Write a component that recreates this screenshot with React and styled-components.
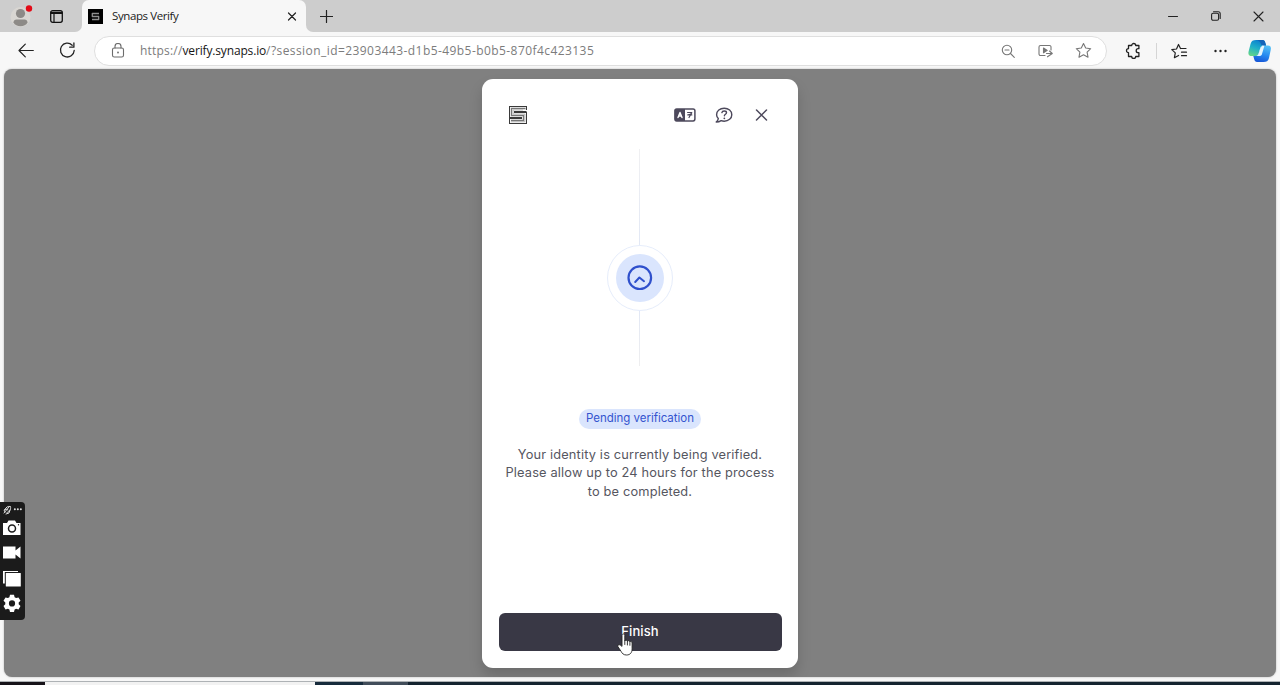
import React from "react";
import styled, { createGlobalStyle } from "styled-components";

const Global = createGlobalStyle`
  * { box-sizing: border-box; }
  body { margin: 0; overflow: hidden; background: #f7f7f7; }
  svg { display: block; flex: none; }
`;

const ui = `"Open Sans", "Noto Sans", sans-serif`;
const brand = `Inter, "Liberation Sans", sans-serif`;

const Window = styled.div`
  position: relative;
  width: 1280px;
  height: 685px;
  display: flex;
  flex-direction: column;
  background: #f7f7f7;
  overflow: hidden;
`;

const TabStrip = styled.header`
  height: 32px;
  flex: none;
  display: flex;
  align-items: stretch;
  background: linear-gradient(#cdcdcd 50%, #f7f7f7 50%);
`;

const StripTools = styled.div`
  width: 82px;
  display: flex;
  align-items: center;
  gap: 17px;
  padding-left: 10px;
  background: #cdcdcd;
  border-bottom-right-radius: 7px;
`;

const Tab = styled.div`
  width: 224px;
  display: flex;
  align-items: center;
  padding: 0 9px 0 6px;
  background: #f7f7f7;
  border-radius: 7px 7px 0 0;
`;

const TabTitle = styled.span`
  flex: 1;
  padding: 0 0 1px 9px;
  font: 11.5px/16px ${ui};
  letter-spacing: -0.4px;
  color: #1b1b1b;
`;

const StripRest = styled.div`
  flex: 1;
  display: flex;
  align-items: center;
  padding-left: 14px;
  background: #cdcdcd;
  border-bottom-left-radius: 7px;
`;

const WindowButtons = styled.div`
  margin-left: auto;
  display: flex;
  align-items: center;
`;

const WindowButton = styled.div`
  width: 43px;
  display: flex;
  justify-content: center;
`;

const Toolbar = styled.div`
  height: 37px;
  flex: none;
  display: flex;
  align-items: center;
  padding: 0 9px 0 18px;
`;

const Address = styled.div`
  width: 1013px;
  height: 30px;
  flex: none;
  margin-left: 18px;
  display: flex;
  align-items: center;
  padding: 0 14px 0 16px;
  border: 1px solid #dfdfdf;
  border-radius: 15px;
  background: #fff;
`;

const Url = styled.span`
  flex: 1;
  padding-left: 15px;
  font: 12px/16px ${ui};
  color: #7c7c7c;
  white-space: nowrap;
`;

const UrlPart = styled.span`
  color: ${(p) => (p.$host ? "#151515" : "inherit")};
  letter-spacing: ${(p) => p.$tracking}px;
`;

const AddressTools = styled.div`
  display: flex;
  gap: 21px;
  align-items: center;
`;

const BrowserTools = styled.div`
  flex: 1;
  display: flex;
  align-items: center;
  padding-left: 18px;
`;

const Tool = styled.span`
  margin-left: ${(p) => p.$gap}px;
`;

const Divider = styled.i`
  width: 1px;
  height: 16px;
  margin-left: 14px;
  background: #d5d5d5;
`;

const Viewport = styled.main`
  flex: 1;
  margin: 0 4px 4px;
  display: flex;
  justify-content: center;
  align-items: flex-start;
  padding-top: 10px;
  border-radius: 8px;
  background: #808080;
  box-shadow: 0 0 2px rgba(0, 0, 0, 0.3);
  overflow: hidden;
`;

const Card = styled.section`
  width: 316px;
  height: 589px;
  display: flex;
  flex-direction: column;
  align-items: center;
  padding: 26px 17px 17px;
  border-radius: 11px;
  background: #fff;
  box-shadow: 0 8px 14px rgba(0, 0, 0, 0.16);
`;

const CardHeader = styled.div`
  width: 100%;
  height: 20px;
  display: flex;
  align-items: center;
  padding: 0 13px 0 10px;
`;

const CardActions = styled.div`
  margin-left: auto;
  display: flex;
  align-items: center;
`;

const Action = styled.span`
  margin-left: ${(p) => p.$gap}px;
`;

const Line = styled.div`
  width: 1px;
  height: ${(p) => p.$height}px;
  margin: ${(p) => p.$top || 0}px 1px 0 0;
  background: ${(p) => p.$color};
`;

const Ring = styled.div`
  width: 66px;
  height: 66px;
  flex: none;
  display: grid;
  place-items: center;
  border: 1px solid #e6edfb;
  border-radius: 50%;
`;

const Disc = styled.div`
  width: 48px;
  height: 48px;
  display: grid;
  place-items: center;
  border-radius: 50%;
  background: #dae5fd;
`;

const Badge = styled.div`
  width: 122px;
  height: 20px;
  margin-top: 43px;
  border-radius: 10px;
  background: #dae5fd;
  text-align: center;
  font: 11.5px/19px ${brand};
  letter-spacing: -0.02px;
  color: #3454cf;
`;

const Message = styled.p`
  width: 282px;
  margin: 16.8px 0 0;
  text-align: center;
  font: 12.8px/18.6px ${brand};
  letter-spacing: 0.16px;
  color: #56565f;
  white-space: nowrap;
`;

const FinishButton = styled.button`
  width: 283px;
  height: 38px;
  flex: none;
  margin-top: auto;
  padding: 0 0 2px;
  border: 0;
  border-radius: 6px;
  background: #393845;
  color: #fff;
  font: 500 13px/18px ${brand};
  letter-spacing: 0.1px;
`;

const Taskbar = styled.footer`
  height: 4px;
  flex: none;
  display: flex;
  border-top: 1px solid #aeb2b5;
  background: #14232f;
`;

const TaskSegment = styled.div`
  width: ${(p) => p.$width}px;
  background: ${(p) => p.$color};
`;

const Recorder = styled.aside`
  position: absolute;
  left: 0;
  top: 501.5px;
  width: 24.5px;
  height: 118px;
  display: flex;
  flex-direction: column;
  align-items: flex-start;
  padding: 3px 0 0 2px;
  border-radius: 0 4px 4px 0;
  background: #1b1b1b;
`;

const Pointer = styled.div`
  position: absolute;
  left: 617px;
  top: 633px;
`;

const Icon = ({ w = 16, h = w, color = "#222", sw = 1.1, children }) => (
  <svg width={w} height={h} viewBox={`0 0 ${w} ${h}`} fill="none" stroke={color}
    strokeWidth={sw} strokeLinecap="round" strokeLinejoin="round">
    {children}
  </svg>
);

const Profile = () => (
  <Icon w={23} h={24} sw={0}>
    <circle cx="10.5" cy="13" r="10" fill="#d9d6d2" />
    <circle cx="10.5" cy="9.5" r="4.6" fill="#8d8a87" />
    <path d="M3.5 18.5c0-2 1.3-3 3-3h8c1.7 0 3 1 3 3-1.2 2.500-4 3.700-7 3.700s-5.800-1.200-7-3.700Z" fill="#8d8a87" />
    <circle cx="19" cy="4.500" r="3.200" fill="#e30a17" />
  </Icon>
);

const Favicon = () => (
  <Icon w={15} color="#8f8f8f" sw={1.3}>
    <rect width="15" height="15" fill="#000" stroke="none" />
    <path d="M11 4.500H4.300V7.500H10.700v3H4" strokeLinecap="butt" />
  </Icon>
);

const SynapsLogo = () => (
  <svg width="18" height="18" viewBox="0 0 18 18" fill="none">
    <path d="M17.500 4V.5H.5v11h12v1H.5v5h17v-11h-12v-1h12" stroke="#3a3a3a" strokeWidth="1.100" />
    <path d="M16.500 2.500h-14v7h12v5H2" stroke="#777" strokeWidth="1.300" />
    <path d="M14 4H4v4h11.800v7.800H2" stroke="#aaa" strokeWidth=".8" />
  </svg>
);

const Translate = () => (
  <Icon w={22} h={14} color="#4d495c" sw={1.5}>
    <rect x=".9" y=".9" width="20" height="12" rx="1.800" />
    <path d="M2 .9h9v12H2.500a1.600 1.600 0 0 1-1.600-1.600V2Z" fill="#4d495c" stroke="none" />
    <path d="m4 9.500 2-5 2 5M4.800 8h2.400" stroke="#fff" strokeWidth="1.400" />
    <path d="M13.600 4.500h4.200c0 1.200-1.600 2-4 2.400h4M17.200 5.700 15 9.500" strokeWidth="1.200" />
  </Icon>
);

const Help = () => (
  <Icon w={18} h={17} color="#4d495c" sw={1.4}>
    <path d="M3.300 11.600C2.200 10.500 1.600 9.200 1.600 7.700 1.600 4 4.900 1.200 9.200 1.200s7.600 2.800 7.600 6.500-3.300 6.500-7.600 6.500c-1.100 0-2.200-.2-3.100-.5-1.300.9-2.800 1.400-4.900 1.400 1.200-1 1.900-2.200 2.100-3.500Z" />
    <path d="M6.900 5.600c.2-1 1-1.600 2.300-1.600s2.300.7 2.300 1.700c0 1.500-2.100 1.500-2.100 3" />
    <path d="M9.300 11.300h.1" strokeWidth="1.700" />
  </Icon>
);

const Copilot = () => (
  <svg width="23" height="22" viewBox="0 0 23 22">
    <defs>
      <linearGradient id="cpA" x1=".6" y1="0" x2=".2" y2="1">
        <stop stopColor="#0a7fd0" /><stop offset=".5" stopColor="#20b0c8" /><stop offset="1" stopColor="#66d787" />
      </linearGradient>
      <linearGradient id="cpB" x1=".7" y1="0" x2=".4" y2="1">
        <stop stopColor="#55c2f6" /><stop offset=".55" stopColor="#278af0" /><stop offset="1" stopColor="#1758d8" />
      </linearGradient>
    </defs>
    <path d="M8 0h6.500c1.700 0 2.300 1 2.700 2.400l.9 3h-2.600c-1.700 0-2.600.8-3.100 2.400l-1.600 5.100C10 15.200 9 16 7.200 16H3.600C.8 16 0 14 .6 11.500l2-7.700C3.400 1 5 0 8 0Z" fill="url(#cpA)" />
    <path d="M15.600 22H9.100c-1.700 0-2.400-1-2.800-2.400L5.300 16h2c1.900 0 2.800-.8 3.400-2.700l1.700-5.400c.6-1.700 1.400-2.500 3.100-2.500H20c2.700 0 3.300 2 2.700 4.500L21 18c-.8 3-2.500 4-5.400 4Z" fill="url(#cpB)" />
    <path d="m12.400 7.900 2.100-2.300h2L13.700 15l-1.500 1h-4c1.400-.4 2-1.100 2.500-2.700Z" fill="#e6f6fb" />
    <path d="M8 0h6.500c1.700 0 2.300 1 2.700 2.400l.9 3h-2L13.400 5c-.6-2-1.500-4.500-5.400-5Z" fill="#1464b8" />
  </svg>
);

const gear = "M7 .8h4l.6 2.400 1.500.9 2.400-.7 2 3.400-1.800 1.700v1.800l1.800 1.700-2 3.400-2.400-.7-1.500.9L11 18H7l-.6-2.400-1.500-.9-2.400.7-2-3.400 1.800-1.700V8.500L.5 6.800l2-3.400 2.400.7 1.500-.9ZM9 6.300a3.100 3.100 0 1 0 0 6.200 3.100 3.100 0 0 0 0-6.200Z";

export default function App() {
  return (
    <Window>
      <Global />
      <TabStrip>
        <StripTools>
          <Profile />
          <Icon w={13} sw={1.3} color="#111">
            <rect x=".7" y=".7" width="11.600" height="11.600" rx="2" />
            <path d="M1 2.400h11M1 3.300h11M4 4v8" strokeWidth="1.200" />
          </Icon>
        </StripTools>
        <Tab>
          <Favicon />
          <TabTitle>Synaps Verify</TabTitle>
          <Icon w={10} sw={1.2}><path d="m1.500 2 7 7m0-7-7 7" /></Icon>
        </Tab>
        <StripRest>
          <Icon w={13} sw={1.2}><path d="M6.500.5v12M.5 6.500h12" /></Icon>
          <WindowButtons>
            <WindowButton><Icon w={10}><path d="M.5 5.500h9" /></Icon></WindowButton>
            <WindowButton>
              <Icon w={10}><rect x=".6" y="2.200" width="7" height="7" rx="1.500" /><path d="M2.500.7h4.700a2 2 0 0 1 2 2v4.700" /></Icon>
            </WindowButton>
            <WindowButton><Icon w={11}><path d="m1 1 9 9m0-9-9 9" /></Icon></WindowButton>
          </WindowButtons>
        </StripRest>
      </TabStrip>

      <Toolbar>
        <Icon w={16} sw={1.2}><path d="M15.300 7.500H1m6.300-6.300L1 7.500l6.300 6.300" /></Icon>
        <Icon w={42} h={17} sw={1.3}>
          <path d="M38.200 3.200A6.900 6.900 0 1 0 40.200 8.500M39.900 1v4.200h-4.200" />
        </Icon>
        <Address>
          <Icon w={14} h={16} color="#6c6c6c">
            <rect x="1.500" y="5" width="11" height="9" rx="1.800" /><path d="M4 5V3.500a3 3 0 0 1 6 0V5" /><circle cx="7" cy="9.500" r=".4" />
          </Icon>
          <Url>
            <UrlPart $tracking={0.2}>https://</UrlPart>
            <UrlPart $host $tracking={-0.16}>verify.synaps.io</UrlPart>
            <UrlPart $tracking={0.43}>/?session_id=23903443-d1b5-49b5-b0b5-870f4c423135</UrlPart>
          </Url>
          <AddressTools>
            <Icon w={16} color="#777"><circle cx="7" cy="7" r="4.700" /><path d="m10.500 10.500 3.800 3.800M5 7h4" /></Icon>
            <Icon w={17} h={16} color="#777">
              <path d="M8 12.500H3.500A1.500 1.500 0 0 1 2 11V4a1.500 1.500 0 0 1 1.500-1.500h9A1.500 1.500 0 0 1 14 4v3M9.500 10.500h5.500M12.500 8l2.800 2.500-4.800 3.300" />
              <path d="m6.500 5 3.700 2.400-3.700 2.400Z" fill="#777" />
            </Icon>
            <Icon w={17} h={17} color="#777"><path d="m8.500 1.500 2.200 4.500 5 .7-3.600 3.500.9 5-4.500-2.400L4 15.200l.9-5-3.600-3.500 5-.7Z" /></Icon>
          </AddressTools>
        </Address>
        <BrowserTools>
          <Icon w={17} h={17} sw={1.3}>
            <path d="M3.500 3.500h3.200a2 2 0 0 1 4 0h3.200v3.200h-.7a2 2 0 0 0 0 4h.7v3.800h-3.200a2 2 0 0 1-4 0H3.500v-3.800a2 2 0 0 1 0-4Z" />
          </Icon>
          <Divider />
          <Tool $gap={14}>
            <Icon w={17} h={16} sw={1.2}>
              <path d="M9.500 5.500 7.500 1.500 5.500 6l-4.700.6 3.500 3.300-.9 4.800 4.200-2.200M9.500 5.500h5.500M10.500 9.200h5M10.500 12.700h5" />
            </Icon>
          </Tool>
          <Tool $gap={25}>
            <Icon w={15} h={4} sw={0}>
              <circle cx="2.500" cy="2" r="1.200" fill="#222" /><circle cx="7.500" cy="2" r="1.200" fill="#222" /><circle cx="12.500" cy="2" r="1.200" fill="#222" />
            </Icon>
          </Tool>
          <Tool $gap={20}><Copilot /></Tool>
        </BrowserTools>
      </Toolbar>

      <Viewport>
        <Card>
          <CardHeader>
            <SynapsLogo />
            <CardActions>
              <Action $gap={0}><Translate /></Action>
              <Action $gap={18.5}><Help /></Action>
              <Action $gap={22.5}><Icon w={13} color="#4d495c" sw={1.5}><path d="m1.500 1 10 10m0-10-10 10" /></Icon></Action>
            </CardActions>
          </CardHeader>
          <Line $height={96} $top={24} $color="linear-gradient(#f0f0f2, #e2e8f5)" />
          <Ring>
            <Disc>
              <Icon w={26} color="#2f50cc" sw={2.2}><circle cx="12.800" cy="12.700" r="11.300" /><path d="m8.200 17 4.200-4.500 4.600 3.700" strokeWidth="2" /></Icon>
            </Disc>
          </Ring>
          <Line $height={55} $color="linear-gradient(#e2e8f5, #eeeeef)" />
          <Badge>Pending verification</Badge>
          <Message>
            Your identity is currently being verified.<br />
            Please allow up to 24 hours for the process<br />
            to be completed.
          </Message>
          <FinishButton>Finish</FinishButton>
        </Card>
      </Viewport>

      <Taskbar>
        <TaskSegment $width={45} $color="#171319" />
        <TaskSegment $width={270} $color="#f2f2f2" />
        <TaskSegment $width={48} $color="#172b3c" />
        <TaskSegment $width={45} $color="#414d5a" />
      </Taskbar>

      <Recorder>
        <Icon w={20} h={10} color="#ddd" sw={1}>
          <path d="m2 8 5-6M3 4.500C4 2 6 1 8.500 1.500 9 4 8 6.500 5 7.500M3 7l-1-2 2-1 2 1M4 9l3-1 1-3" />
          <path d="M12.800 4.300h.1M15.800 4.300h.1M18.800 4.300h.1" strokeWidth="1.900" />
        </Icon>
        <Icon w={20} h={23} sw={0}>
          <path d="M1 8h4l1.500-2.500h6.500l1.500 2.500H18.500v12H1Z" fill="#fff" />
          <circle cx="10" cy="13.500" r="3.500" stroke="#1b1b1b" strokeWidth="1.500" /><circle cx="16.500" cy="9.800" r=".7" fill="#1b1b1b" />
        </Icon>
        <Icon w={20} h={26} sw={0}><path d="M1 8.500h12.500v4l5-4v12l-5-4v4H1Z" fill="#fff" /></Icon>
        <Icon w={20} h={26} sw={0}><path d="M1 7h15v1H2.800v11.500H1Z" fill="#fff" /><rect x="3.800" y="9" width="15" height="13.500" rx=".5" fill="#fff" /></Icon>
        <Icon w={20} h={25} sw={0}><path transform="translate(1 4)" d={gear} fill="#fff" fillRule="evenodd" /></Icon>
      </Recorder>

      <Pointer>
        <Icon w={18} h={24} color="#222" sw={0.9}>
          <path d="M5 13V2.500c0-2 2.800-2 2.800 0V8c.5-1.300 2.500-1 2.600.3.600-1 2.300-.8 2.500.6.700-.8 2.200-.3 2.200 1v6c0 3.800-2 6.100-5.600 6.100-3 0-4.300-1.500-5.500-3.700l-3-4.500c-1-1.500 1-2.800 2.200-1.800Z" fill="#fff" />
          <path d="M7.800 8v3.500M10.400 8.500V12M12.900 9.500v2.800" />
        </Icon>
      </Pointer>
    </Window>
  );
}
